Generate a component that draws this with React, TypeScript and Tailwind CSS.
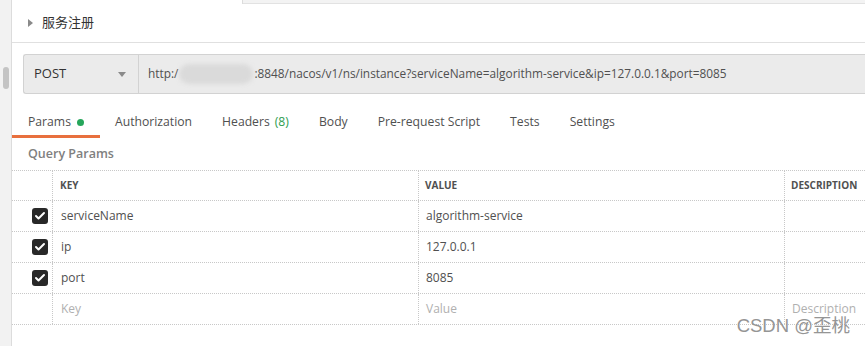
import { Check } from "lucide-react"

type Row = {
  key: string
  value: string
}

const rows: Row[] = [
  { key: "serviceName", value: "algorithm-service" },
  { key: "ip", value: "127.0.0.1" },
  { key: "port", value: "8085" },
]

const tabs = ["Params", "Authorization", "Headers", "Body", "Pre-request Script", "Tests", "Settings"]

export default function App() {
  return (
    <div
      className="w-[865px] h-[346px] flex bg-white text-[#505050] overflow-hidden"
      style={{ fontFamily: '"Open Sans", "Noto Sans CJK SC", sans-serif' }}
    >
      {/* 左のスクロールバー */}
      <div className="w-[12px] shrink-0 bg-[#f2f2f2] border-r border-[#dcdcdc] flex justify-center">
        <div className="mt-[67px] w-[6px] h-[22px] rounded bg-[#c4c4c4]" />
      </div>

      <div className="flex-1 flex flex-col relative">
        {/* 上のタブの端 */}
        <div className="h-[4px] flex">
          <div className="w-[231px] border-r border-[#dcdcdc]" />
          <div className="flex-1 bg-[#f3f3f3] border-b border-[#e2e2e2]" />
        </div>

        {/* 服务注册 */}
        <div className="h-[39px] flex items-center pl-[16px] border-b border-[#e0e0e0]">
          <span className="w-0 h-0 border-y-[4px] border-y-transparent border-l-[5px] border-l-[#8a8a8a] mr-[9px]" />
          <span className="text-[13px] text-[#333]">服务注册</span>
        </div>

        {/* リクエストバー */}
        <div className="pl-[11px] pt-[11px]">
          <div className="h-[40px] flex rounded-l-[3px] border border-r-0 border-[#d2d2d2] bg-[#ebebeb]">
            <div className="w-[115px] flex items-center justify-between pl-[10px] pr-[12px] border-r border-[#d2d2d2]">
              <span className="text-[13px] text-[#333]">POST</span>
              <span className="w-0 h-0 border-x-[4px] border-x-transparent border-t-[5px] border-t-[#8a8a8a]" />
            </div>
            <div className="flex-1 flex items-center pl-[9px] text-[11.85px] text-[#505050] whitespace-nowrap">
              <span>http:/</span>
              <span className="w-[74px] h-[20px] rounded-full bg-[#dadada] blur-[2px] mx-[1px]" />
              <span>:8848/nacos/v1/ns/instance?serviceName=algorithm-service&amp;ip=127.0.0.1&amp;port=8085</span>
            </div>
          </div>
        </div>

        {/* タブ */}
        <div className="mt-[15px] h-[29px] flex text-[12.2px] text-[#505050]">
          {tabs.map((t, i) => (
            <div
              key={t}
              className={
                i === 0
                  ? "px-[16px] flex items-center border-b-[3px] border-[#e8703e]"
                  : "px-[15px] flex items-center pb-[3px]"
              }
            >
              {t}
              {i === 0 && <span className="ml-[6px] w-[7px] h-[7px] rounded-full bg-[#26a65b]" />}
              {t === "Headers" && <span className="ml-[5px] text-[#2e9d4f]">(8)</span>}
            </div>
          ))}
        </div>

        {/* Query Params */}
        <div className="h-[32px] flex items-center pl-[16px] text-[12.5px] font-semibold text-[#808080]">
          Query Params
        </div>

        {/* テーブル */}
        <div className="border-t border-dotted border-[#c8c8c8] text-[12px]">
          <div className="h-[30px] grid grid-cols-[41px_366px_366px_1fr] border-b border-dotted border-[#c8c8c8] text-[10px] font-bold text-[#505050]">
            <div className="border-r border-dotted border-[#c8c8c8]" />
            <div className="flex items-center pl-[7px] border-r border-dotted border-[#c8c8c8]">KEY</div>
            <div className="flex items-center pl-[6px] border-r border-dotted border-[#c8c8c8]">VALUE</div>
            <div className="flex items-center pl-[6px]">DESCRIPTION</div>
          </div>

          {rows.map(r => (
            <div
              key={r.key}
              className="h-[31px] grid grid-cols-[41px_366px_366px_1fr] border-b border-dotted border-[#c8c8c8]"
            >
              <div className="flex items-center justify-end pr-[4px] border-r border-dotted border-[#c8c8c8]">
                <span className="w-[16px] h-[16px] rounded-[3px] bg-[#282828] flex items-center justify-center">
                  <Check size={12} strokeWidth={4} color="#fff" />
                </span>
              </div>
              <div className="flex items-center pl-[8px] border-r border-dotted border-[#c8c8c8]">{r.key}</div>
              <div className="flex items-center pl-[7px] border-r border-dotted border-[#c8c8c8]">{r.value}</div>
              <div />
            </div>
          ))}

          <div className="h-[31px] grid grid-cols-[41px_366px_366px_1fr] border-b border-dotted border-[#c8c8c8] text-[#b0b0b0]">
            <div className="border-r border-dotted border-[#c8c8c8]" />
            <div className="flex items-center pl-[8px] border-r border-dotted border-[#c8c8c8]">Key</div>
            <div className="flex items-center pl-[7px] border-r border-dotted border-[#c8c8c8]">Value</div>
            <div className="flex items-center pl-[7px] whitespace-nowrap">Description</div>
          </div>
        </div>

        {/* 透かし */}
        <div
          className="absolute right-[15px] bottom-[6px] text-[18.5px] text-[#959595]"
          style={{ fontFamily: '"Liberation Sans", "Noto Sans CJK SC", sans-serif' }}
        >
          CSDN @歪桃
        </div>
      </div>
    </div>
  )
}
